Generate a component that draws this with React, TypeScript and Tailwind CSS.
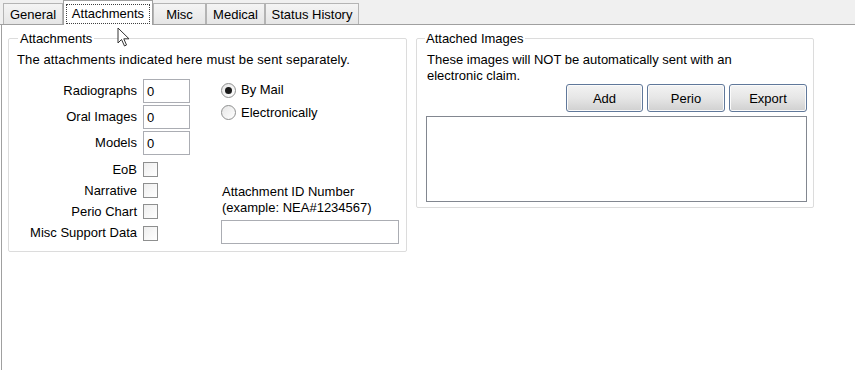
import React from "react";

const Tab = ({ label, w, selected }: { label: string; w: number; selected?: boolean }) => {
  if (selected) {
    return (
      <div
        className="relative z-10 -mb-px h-[25px] border border-b-0 border-[#a0a0a0] bg-white flex items-center justify-center px-[2px] pt-[1px]"
        style={{ width: w }}
      >
        <div className="w-full h-[20px] border border-dotted border-[#404040] flex items-center justify-center leading-none">
          {label}
        </div>
      </div>
    );
  }
  return (
    <div
      className="h-[21px] border border-b-0 border-[#b4b4b4] bg-gradient-to-b from-[#f4f4f4] to-[#e6e6e6] flex items-center justify-center leading-none"
      style={{ width: w }}
    >
      {label}
    </div>
  );
};

const TextBox = ({ value, w }: { value?: string; w: number }) => (
  <div
    className="h-[24px] border border-[#abadb3] bg-white flex items-center pl-[3px] leading-none"
    style={{ width: w }}
  >
    {value}
  </div>
);

const CheckBox = () => (
  <div className="w-[15px] h-[15px] border border-[#8e8f8f] bg-gradient-to-br from-[#eeeeee] to-white" />
);

const Radio = ({ checked }: { checked?: boolean }) => (
  <div className="w-[15px] h-[15px] rounded-full border border-[#8e8f8f] bg-gradient-to-br from-[#e6e6e6] to-white flex items-center justify-center">
    {checked && <div className="w-[7px] h-[7px] rounded-full bg-[#1a1a1a]" />}
  </div>
);

const Button = ({ label, w }: { label: string; w: number }) => (
  <div
    className="h-[28px] rounded-[3px] border border-[#60789a] shadow-[inset_0_0_0_1px_#fbfbfb] bg-gradient-to-b from-[#f3f3f3] via-[#e6e6e6] to-[#d0d0d0] flex items-center justify-center leading-none"
    style={{ width: w }}
  >
    {label}
  </div>
);

export default function App() {
  return (
    <div className="relative w-[855px] h-[370px] overflow-hidden bg-white text-[13px] text-black font-['Liberation_Sans',Arial,sans-serif]">
      {/* tab strip */}
      <div className="h-[25px] bg-[#f0f0f0] border-b border-[#a0a0a0] flex items-end pl-[3px]">
        <Tab label="General" w={60} />
        <Tab label="Attachments" w={90} selected />
        <Tab label="Misc" w={53} />
        <Tab label="Medical" w={59} />
        <Tab label="Status History" w={94} />
      </div>

      {/* tab page */}
      <div className="ml-[1px] h-[345px] border-l border-[#a0a0a0] bg-white flex items-start pl-[6px] pt-[6px] gap-[9px]">
        {/* Attachments group */}
        <fieldset className="w-[399px] h-[221px] border border-[#dcdcdc] rounded-[2px] pl-[8px] pr-[6px]">
          <legend className="ml-[1px] px-[2px] leading-[15px]">Attachments</legend>
          <div className="leading-[16px] pt-[6px] tracking-[0.12px]">The attachments indicated here must be sent separately.</div>
          <div className="flex mt-[11px]">
            <div className="grid grid-cols-[120px_auto] gap-x-[6px] items-center">
              <div className="text-right h-[24px] leading-[24px]">Radiographs</div>
              <TextBox value="0" w={47} />
              <div className="text-right h-[24px] leading-[24px] mt-[2px]">Oral Images</div>
              <div className="mt-[2px]"><TextBox value="0" w={47} /></div>
              <div className="text-right h-[24px] leading-[24px] mt-[2px]">Models</div>
              <div className="mt-[2px]"><TextBox value="0" w={47} /></div>
              <div className="text-right h-[21px] leading-[21px] mt-[4px]">EoB</div>
              <div className="h-[21px] mt-[4px] flex items-center"><CheckBox /></div>
              <div className="text-right h-[21px] leading-[21px]">Narrative</div>
              <div className="h-[21px] flex items-center"><CheckBox /></div>
              <div className="text-right h-[21px] leading-[21px]">Perio Chart</div>
              <div className="h-[21px] flex items-center"><CheckBox /></div>
              <div className="text-right h-[22px] leading-[22px]">Misc Support Data</div>
              <div className="h-[22px] flex items-center"><CheckBox /></div>
            </div>
            <div className="ml-[31px] flex flex-col">
              <div className="h-[22px] flex items-center gap-[5px]">
                <Radio checked />
                <span>By Mail</span>
              </div>
              <div className="h-[23px] flex items-center gap-[5px]">
                <Radio />
                <span>Electronically</span>
              </div>
              <div className="mt-[60px] leading-[16px] pl-[1px]">
                Attachment ID Number
                <br />
                (example: NEA#1234567)
              </div>
              <div className="mt-[4px]">
                <TextBox w={178} />
              </div>
            </div>
          </div>
        </fieldset>

        {/* Attached Images group */}
        <fieldset className="w-[398px] h-[177px] border border-[#dcdcdc] rounded-[2px] pl-[9px] pr-[6px]">
          <legend className="-ml-[1px] px-[1px] leading-[15px]">Attached Images</legend>
          <div className="leading-[16px] pt-[6px] pl-[1px]">
            These images will NOT be automatically sent with an
            <br />
            electronic claim.
          </div>
          <div className="flex justify-end gap-[4px]">
            <Button label="Add" w={77} />
            <Button label="Perio" w={78} />
            <Button label="Export" w={78} />
          </div>
          <div className="mt-[4px] h-[86px] border border-[#828790] bg-white" />
        </fieldset>
      </div>

      {/* mouse cursor */}
      <svg className="absolute left-[117px] top-[27px]" width="14" height="21" viewBox="0 0 14 21">
        <path
          d="M1 1 L1 16 L4.5 12.5 L7.5 19 L9.5 18 L6.8 11.8 L12 11.8 Z"
          fill="white"
          stroke="#333"
          strokeWidth="1"
          strokeLinejoin="round"
        />
      </svg>
    </div>
  );
}
